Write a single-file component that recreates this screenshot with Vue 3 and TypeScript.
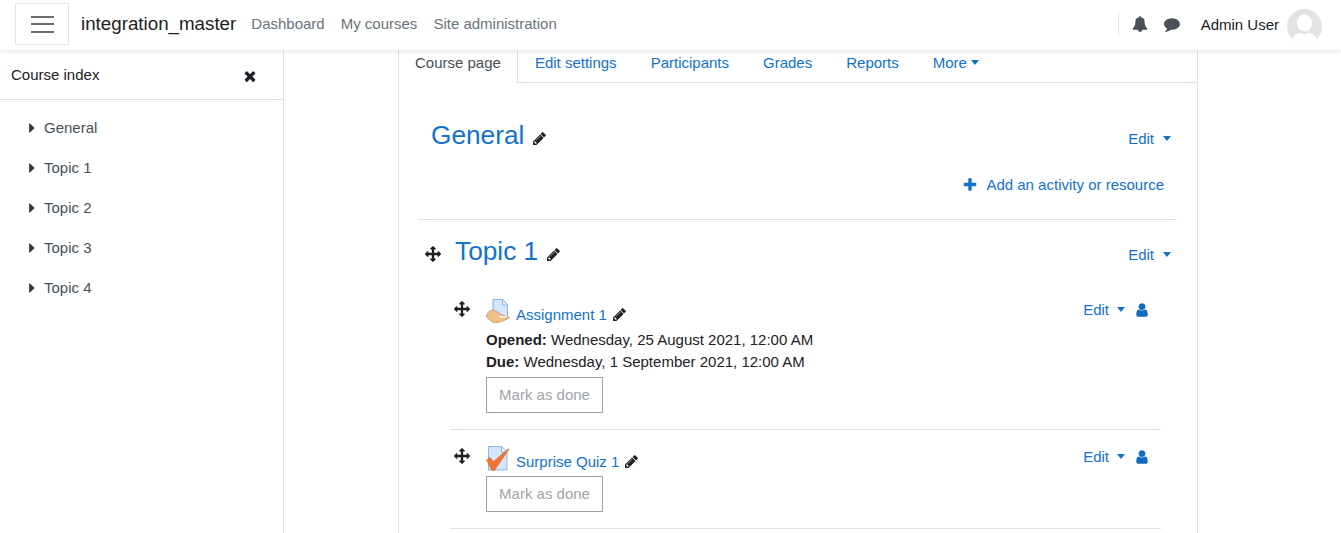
<script setup lang="ts">
const P: Record<string, string> = {
  times: 'M1490 1322q0 40-28 68l-136 136q-28 28-68 28t-68-28l-294-294-294 294q-28 28-68 28t-68-28l-136-136q-28-28-28-68t28-68l294-294-294-294q-28-28-28-68t28-68l136-136q28-28 68-28t68 28l294 294 294-294q28-28 68-28t68 28l136 136q28 28 28 68t-28 68l-294 294 294 294q28 28 28 68z',
  plus: 'M1600 736v192q0 40-28 68t-68 28h-416v416q0 40-28 68t-68 28h-192q-40 0-68-28t-28-68v-416h-416q-40 0-68-28t-28-68v-192q0-40 28-68t68-28h416v-416q0-40 28-68t68-28h192q40 0 68 28t28 68v416h416q40 0 68 28t28 68z',
  user: 'M1536 1399q0 109-62.5 187t-150.5 78h-854q-88 0-150.5-78t-62.5-187q0-85 8.5-160.5t31.5-152 58.5-131 94-89 134.5-34.5q131 128 313 128t313-128q76 0 134.5 34.5t94 89 58.5 131 31.5 152 8.5 160.5zm-256-887q0 159-112.5 271.5t-271.5 112.5-271.5-112.5-112.5-271.5 112.5-271.5 271.5-112.5 271.5 112.5 112.5 271.5z',
  bell: 'M912 1696q0-16-16-16-59 0-101.5-42.5t-42.5-101.5q0-16-16-16t-16 16q0 73 51.5 124.5t124.5 51.5q16 0 16-16zm816-288q0 52-38 90t-90 38h-448q0 106-75 181t-181 75-181-75-75-181h-448q-52 0-90-38t-38-90q50-42 91-88t85-119.5 74.5-158.5 50-206 19.5-260q0-152 117-282.5t307-158.5q-8-19-8-39 0-40 28-68t68-28 68 28 28 68q0 20-8 39 190 28 307 158.5t117 282.5q0 139 19.5 260t50 206 74.5 158.5 85 119.5 91 88z',
  comment: 'M1792 896q0 174-120 321.5t-326 233-450 85.5q-70 0-145-8-198 175-460 242-49 14-114 22-17 2-30.5-9t-17.5-29v-1q-3-4-.5-12t2-10 4.5-9.5l6-9 7-8.5 8-9q7-8 31-34.5t34.5-38 31-39.5 32.5-51 27-59 26-76q-157-89-247.5-220t-90.5-281q0-130 71-248.5t191-204.5 286-136.5 348-50.5q244 0 450 85.5t326 233 120 321.5z',
  pencil: 'M491 1536l91-91-235-235-91 91v107h128v128h107zm523-928q0-22-22-22-10 0-17 7l-542 542q-7 7-7 17 0 22 22 22 10 0 17-7l542-542q7-7 7-17zm-54-192l416 416-832 832h-416v-416zm683 96q0 53-37 90l-166 166-416-416 166-165q36-38 90-38 53 0 91 38l235 234q37 39 37 91z',
  arrows: 'M1792 896q0 26-19 45l-256 256q-19 19-45 19t-45-19-19-45v-128h-384v384h128q26 0 45 19t19 45-19 45l-256 256q-19 19-45 19t-45-19l-256-256q-19-19-19-45t19-45 45-19h128v-384h-384v128q0 26-19 45t-45 19-45-19l-256-256q-19-19-19-45t19-45l256-256q19-19 45-19t45 19 19 45v128h384v-384h-128q-26 0-45-19t-19-45 19-45l256-256q19-19 45-19t45 19l256 256q19 19 19 45t-19 45-45 19h-128v384h384v-128q0-26 19-45t45-19 45 19l256 256q19 19 19 45z',
  caret: 'M1152 896q0 26-19 45l-448 448q-19 19-45 19t-45-19-19-45v-896q0-26 19-45t45-19 45 19l448 448q19 19 19 45z'
}
const navLinks = ['Dashboard', 'My courses', 'Site administration']
const topics = ['General', 'Topic 1', 'Topic 2', 'Topic 3', 'Topic 4']
const tabs = ['Edit settings', 'Participants', 'Grades', 'Reports']
</script>

<template>
  <div class="page">
    <header class="navbar">
      <button class="burger" aria-label="Menu"><span></span><span></span><span></span></button>
      <span class="brand">integration_master</span>
      <nav class="nav-links"><a v-for="l in navLinks" :key="l">{{ l }}</a></nav>
      <div class="nav-right">
        <div class="nav-icons">
          <svg class="i-bell" viewBox="0 0 1792 1792"><path :d="P.bell" /></svg>
          <svg class="i-comment" viewBox="0 0 1792 1792"><path :d="P.comment" /></svg>
        </div>
        <span class="username">Admin User</span>
        <svg class="avatar" viewBox="0 0 35 35">
          <defs><clipPath id="av"><circle cx="17.5" cy="17.5" r="17.5" /></clipPath></defs>
          <circle cx="17.5" cy="17.5" r="17.5" fill="#e3e3e3" />
          <g clip-path="url(#av)" fill="#fff">
            <ellipse cx="17.5" cy="14" rx="7.6" ry="8.4" />
            <path d="M4 35c1-7 4-10 9-11.500 3 2 6 2 9 0 5 1.500 8 4.500 9 11.500z" />
          </g>
        </svg>
      </div>
    </header>

    <div class="body">
      <aside class="drawer">
        <div class="drawer-head">
          <span>Course index</span>
          <svg class="i-times" viewBox="0 0 1792 1792"><path :d="P.times" /></svg>
        </div>
        <ul class="index">
          <li v-for="t in topics" :key="t">
            <svg class="i-caret" viewBox="0 0 1792 1792"><path :d="P.caret" /></svg>{{ t }}
          </li>
        </ul>
      </aside>

      <main class="main">
        <div class="card">
          <ul class="tabs">
            <li class="tab active">Course page</li>
            <li v-for="t in tabs" :key="t" class="tab">{{ t }}</li>
            <li class="tab">More<i class="caret more-caret"></i></li>
          </ul>

          <div class="content">
            <section class="section first">
              <div class="sec-head">
                <h3><a>General</a><svg class="i-pencil big" viewBox="0 0 1792 1792"><path :d="P.pencil" /></svg></h3>
                <a class="edit">Edit<i class="caret"></i></a>
              </div>
              <div class="add"><svg class="i-plus" viewBox="0 0 1792 1792"><path :d="P.plus" /></svg>Add an activity or resource</div>
            </section>

            <section class="section">
              <div class="sec-head topic">
                <svg class="i-move" viewBox="0 0 1792 1792"><path :d="P.arrows" /></svg>
                <h3><a>Topic 1</a><svg class="i-pencil big" viewBox="0 0 1792 1792"><path :d="P.pencil" /></svg></h3>
                <a class="edit">Edit<i class="caret"></i></a>
              </div>

              <div class="activity a1">
                <svg class="i-move" viewBox="0 0 1792 1792"><path :d="P.arrows" /></svg>
                <div class="act-body">
                  <div class="act-title">
                    <svg class="modicon" viewBox="0 0 24 25">
                      <path d="M7 .500h9.500l5 5.500v14h-14.500z" fill="#d3e6fb" stroke="#8db6ea" />
                      <path d="M16.500 .500v5.500h5z" fill="#f0f6fd" stroke="#8db6ea" />
                      <path d="M.500 16c1.500-3 3.500-4.500 5.500-5 3 .5 6 2 8 4l4 1.500 5.500 2c-1.500 1-5 3-8 4-4 1.500-8 1.500-10.500-.5l-4.500-4z" fill="#f1bf8c" stroke="#c98f56" stroke-width=".8" />
                      <path d="M13 17.800h8" stroke="#fff" stroke-width="1.200" />
                    </svg>
                    <a>Assignment 1</a><svg class="i-pencil" viewBox="0 0 1792 1792"><path :d="P.pencil" /></svg>
                  </div>
                  <div class="dates"><b>Opened:</b> Wednesday, 25 August 2021, 12:00 AM</div>
                  <div class="dates"><b>Due:</b> Wednesday, 1 September 2021, 12:00 AM</div>
                  <button class="done">Mark as done</button>
                </div>
                <div class="act-edit">
                  <a class="edit">Edit<i class="caret"></i></a>
                  <svg class="i-user" viewBox="0 0 1792 1792"><path :d="P.user" /></svg>
                </div>
              </div>

              <div class="activity a2">
                <svg class="i-move" viewBox="0 0 1792 1792"><path :d="P.arrows" /></svg>
                <div class="act-body">
                  <div class="act-title">
                    <svg class="modicon" viewBox="0 0 24 25">
                      <path d="M2.500.500h13l5.500 5.500v18h-18.500z" fill="#d3e6fb" stroke="#8db6ea" />
                      <path d="M15.500.500v5.500h5.500z" fill="#f0f6fd" stroke="#8db6ea" />
                      <path d="M.500 14l3.500-2.500 3.500 4L22 3h1.200L8.500 24.500h-2.500z" fill="#ef7433" stroke="#d85f20" stroke-width=".5" />
                    </svg>
                    <a>Surprise Quiz 1</a><svg class="i-pencil" viewBox="0 0 1792 1792"><path :d="P.pencil" /></svg>
                  </div>
                  <button class="done tight">Mark as done</button>
                </div>
                <div class="act-edit">
                  <a class="edit">Edit<i class="caret"></i></a>
                  <svg class="i-user" viewBox="0 0 1792 1792"><path :d="P.user" /></svg>
                </div>
              </div>
            </section>
          </div>
        </div>
      </main>
    </div>
  </div>
</template>

<style>
html, body { margin: 0; height: 533px; overflow: hidden; background: #fff; }
</style>

<style scoped>
.page { font: 15px/22.5px "Liberation Sans", Arial, sans-serif; color: #1d2125; height: 533px; overflow: hidden; }
a { color: #1272cb; }
svg { display: block; fill: currentColor; flex: none; }
ul { list-style: none; margin: 0; padding: 0; }

.navbar { position: relative; z-index: 2; display: flex; align-items: center; height: 50px; padding: 0 19px 0 15px; background: #fff; box-shadow: 0 2px 4px rgba(0,0,0,.08); box-sizing: border-box; }
.burger { width: 54px; height: 42px; margin: -2px 12px 0 0; padding: 0; background: #fff; border: 1px solid #e4e4e4; display: flex; flex-direction: column; align-items: center; justify-content: center; gap: 5.500px; }
.burger span { display: block; width: 23px; height: 2px; background: #6e6e6e; }
.brand { font-size: 18.75px; margin-top: -1px; }
.nav-links { display: flex; margin-left: 7px; margin-top: -1px; }
.nav-links a { padding: 0 8px; color: #6a737b; }
.nav-right { margin-left: auto; display: flex; align-items: center; margin-top: 2px; }
.nav-icons { display: flex; align-items: center; gap: 16px; height: 22px; margin-top: -4px; padding-left: 13px; margin-left: 1px; border-left: 1px solid #dee2e6; color: #495057; }
.i-bell { width: 16px; height: 16px; }
.i-comment { width: 16px; height: 16px; }
.username { margin: -2px 8px 0 21px; }
.avatar { width: 35px; height: 35px; }

.body { display: flex; height: 483px; }
.drawer { width: 284px; flex: none; box-sizing: border-box; border-right: 1px solid #dee2e6; background: #fff; }
.drawer-head { display: flex; align-items: center; justify-content: space-between; height: 50px; padding: 2px 25px 0 11px; border-bottom: 1px solid #dee2e6; box-sizing: border-box; }
.i-times { width: 16px; height: 16px; color: #1d2125; }
.index { padding-top: 8px; }
.index li { display: flex; align-items: center; height: 40px; padding-left: 24px; color: #495057; }
.i-caret { width: 16px; height: 16px; margin-right: 4px; color: #343a40; }

.main { flex: 1; padding-left: 114px; }
.card { width: 800px; box-sizing: border-box; height: 483px; border: 1px solid #dee2e6; border-width: 0 1px; }
.tabs { display: flex; height: 33px; border-bottom: 1px solid #dee2e6; box-sizing: border-box; }
.tab { padding: 2px 17px 0; color: #1272cb; height: 33px; box-sizing: border-box; }
.tab.active { color: #495057; background: #fff; padding: 2px 16px 0; border-right: 1px solid #dee2e6; height: 33px; }
.caret { display: inline-block; width: 0; height: 0; border-left: 4.500px solid transparent; border-right: 4.500px solid transparent; border-top: 5px solid currentColor; margin-left: 9px; vertical-align: 3px; }
.more-caret { margin-left: 4px; }

.content { padding: 0 20px 0 19px; }
.section.first { padding-top: 32px; height: 104px; border-bottom: 1px solid #dee2e6; }
.sec-head { display: flex; align-items: center; padding-left: 13px; padding-right: 6px; height: 40px; }
h3 { margin: 0; font-size: 26.25px; font-weight: 400; line-height: 32px; display: flex; align-items: center; flex: 1; }
.i-pencil { width: 15px; height: 15px; color: #1d2125; margin-left: 5px; margin-bottom: 2px; }
.i-pencil.big { margin-left: 8px; margin-top: 7px; margin-bottom: 0; }
.edit { display: inline-block; white-space: nowrap; }
.sec-head > .edit { margin-top: 8px; }
.add { display: flex; align-items: center; justify-content: flex-end; padding-right: 13px; margin-top: 19px; color: #1272cb; }
.i-plus { width: 16px; height: 16px; margin-right: 8px; }
.sec-head.topic { padding-left: 7px; margin-top: 12px; }
.topic h3 { margin-left: 14px; margin-top: -2px; }
.topic .i-pencil.big { margin-top: 7px; }
.topic > .i-move { margin-top: 4px; }
.topic > .edit { margin-top: 6px; }
.i-move { width: 16px; height: 16px; color: #1d2125; }
.activity { display: flex; margin: 0 16px 0 32px; border-bottom: 1px solid #dee2e6; padding-left: 4px; }
.a1 { margin-top: 27px; height: 130px; }
.a2 { padding-top: 16px; height: 82px; }
.activity > .i-move { margin-top: 2px; }
.act-body { margin-left: 16px; flex: 1; }
.act-title { display: flex; align-items: flex-end; height: 25px; }
.act-title a { line-height: 20px; margin-bottom: -1px; }
.modicon { width: 24px; height: 25px; margin-right: 6px; }
.dates { height: 22px; line-height: 22px; }
.act-title + .dates { margin-top: 5px; }
.done { display: block; margin-top: 4px; width: 117px; height: 36px; padding: 0; background: #fff; border: 1px solid #a0a4a8; color: #a0a4a8; font: inherit; }
.done.tight { margin-top: 5px; }
.act-edit { display: flex; align-items: center; height: 22px; margin-right: 11px; }
.act-edit .caret { margin-left: 8px; margin-right: 9px; }
.i-user { width: 16px; height: 16px; color: #0f6cbf; }
</style>
